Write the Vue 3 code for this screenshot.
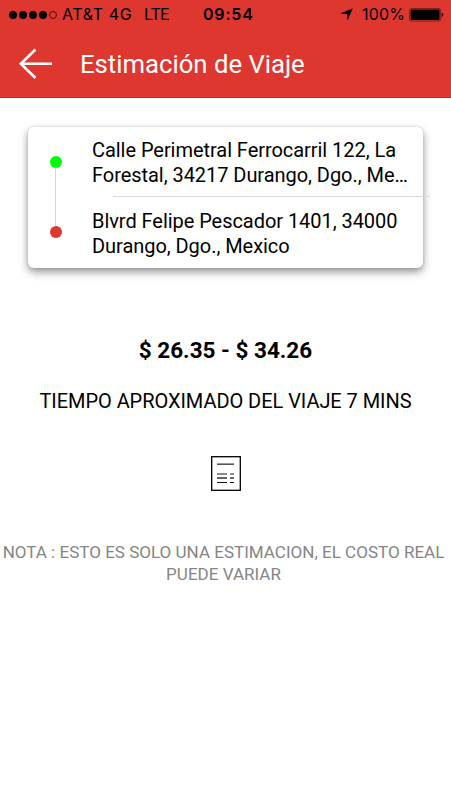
<template>
  <div class="screen">
    <header class="header">
      <div class="status-bar">
        <div class="signal">
          <span v-for="n in 5" :key="n" class="signal-dot" :class="{ empty: n === 5 }"></span>
        </div>
        <span class="carrier">AT&amp;T 4G</span>
        <span class="network">LTE</span>
        <span class="time">09:54</span>
        <svg class="location" width="13" height="13" viewBox="0 0 13 13">
          <path d="M12.8 0.2 L7.6 12.6 L6.9 6.1 L0.2 5.5 Z" fill="#000" />
        </svg>
        <span class="percent">100%</span>
        <svg class="battery" width="35" height="14" viewBox="0 0 35 14">
          <rect x="0.6" y="0.6" width="31" height="12.4" rx="1.6" fill="none" stroke="#7d1d19" stroke-width="1" />
          <rect x="1.6" y="1.6" width="29" height="10.4" rx="0.8" fill="#000" />
          <path d="M32.6 4.6 Q34.4 5.2 34.4 6.8 Q34.4 8.4 32.6 9 Z" fill="#2b0806" />
        </svg>
      </div>

      <div class="nav-bar">
        <button class="back-button" aria-label="Atrás">
          <svg width="34" height="32" viewBox="0 0 34 32">
            <path d="M16.5 1.5 L1.8 15.7 L16.5 30 M1.8 15.7 H33" fill="none" stroke="#fff" stroke-width="2.6" />
          </svg>
        </button>
        <h1 class="title">Estimación de Viaje</h1>
      </div>
    </header>

    <section class="route-card">
      <div class="route-marks">
        <span class="dot origin"></span>
        <span class="route-line"></span>
        <span class="dot destination"></span>
      </div>
      <div class="addresses">
        <p class="address">
          <span v-for="line in origin" :key="line" class="line">{{ line }}</span>
        </p>
        <div class="divider"></div>
        <p class="address">
          <span v-for="line in destination" :key="line" class="line">{{ line }}</span>
        </p>
      </div>
    </section>

    <section class="estimate">
      <p class="price">$ 26.35 - $ 34.26</p>
      <p class="duration">TIEMPO APROXIMADO DEL VIAJE 7 MINS</p>
      <svg class="receipt" width="30" height="36" viewBox="0 0 30 36">
        <rect x="0.7" y="0.7" width="28.6" height="33.6" fill="#fff" stroke="#000" stroke-width="1.3" />
        <path d="M6 8.2 H23" stroke="#555" stroke-width="1.6" />
        <path d="M6 18 H16 M19 18 H23" stroke="#666" stroke-width="1.5" />
        <path d="M6 22 H16 M19 22 H23" stroke="#333" stroke-width="1.4" />
        <path d="M6 26.5 H16 M19 26.5 H23" stroke="#111" stroke-width="1.2" />
      </svg>
      <p class="note">NOTA : ESTO ES SOLO UNA ESTIMACION, EL COSTO REAL<br />PUEDE VARIAR</p>
    </section>
  </div>
</template>

<script setup>
const origin = ["Calle Perimetral Ferrocarril 122, La", "Forestal, 34217 Durango, Dgo., Me…"];

const destination = ["Blvrd Felipe Pescador 1401, 34000", "Durango, Dgo., Mexico"];
</script>

<style>
body {
  margin: 0;
  background: #fff;
}
</style>

<style scoped>
.screen {
  width: 451px;
  height: 800px;
  overflow: hidden;
  background: #fff;
  color: #000;
  font-family: Roboto, sans-serif;
}

p,
h1 {
  margin: 0;
  font-weight: 400;
  white-space: nowrap;
}

.header {
  height: 98px;
  box-sizing: border-box;
  background: #de3730;
  border-bottom: 1px solid #d81f1b;
}

.status-bar {
  display: flex;
  align-items: center;
  height: 29px;
  padding-left: 9px;
  font-family: Inter, sans-serif;
  font-size: 16px;
  line-height: 29px;
  white-space: nowrap;
}

.signal {
  display: flex;
  gap: 2px;
  width: 53px;
}

.signal-dot {
  box-sizing: border-box;
  width: 8px;
  height: 8px;
  border-radius: 50%;
  background: #000;
}

.signal-dot.empty {
  background: none;
  border: 1px solid #4a110e;
}

.carrier {
  width: 82px;
  letter-spacing: 0.6px;
}

.network {
  width: 59px;
  letter-spacing: -0.9px;
}

.time {
  width: 137px;
  font-weight: 600;
  letter-spacing: 0.8px;
}

.location {
  width: 13px;
  margin-right: 9px;
}

.percent {
  width: 47px;
  letter-spacing: 0.2px;
}

.battery {
  flex-shrink: 0;
}

.nav-bar {
  display: flex;
  align-items: center;
  height: 69px;
  padding-left: 19px;
}

.back-button {
  display: flex;
  width: 61px;
  padding: 0;
  border: none;
  background: none;
  cursor: pointer;
}

.title {
  color: #fff;
  font-size: 25.7px;
  line-height: 30px;
}

.route-card {
  display: flex;
  box-sizing: border-box;
  width: 395px;
  height: 141px;
  margin: 28.5px 0 0 28px;
  border-radius: 6px;
  background: #fff;
  box-shadow: 0 4px 8px rgba(0, 0, 0, 0.42), 0 0 3px rgba(0, 0, 0, 0.12);
}

.route-marks {
  display: flex;
  flex-direction: column;
  flex-shrink: 0;
  align-items: center;
  width: 55px;
  margin-right: 1px;
  padding-top: 29px;
}

.dot {
  width: 12px;
  height: 12px;
  border-radius: 50%;
}

.origin {
  background: #00fc08;
}

.destination {
  background: #de3730;
}

.route-line {
  width: 1px;
  height: 58px;
  background: #d8d8d8;
}

.addresses {
  padding: 11px 0 0 8px;
}

.address {
  font-size: 20px;
  line-height: 25.5px;
  letter-spacing: -0.05px;
}

.line {
  display: block;
}

/* runs past the right edge of the card */
.divider {
  width: 317px;
  height: 1px;
  margin: 7.5px 0 11.5px 21px;
  background: #dadada;
}

.estimate {
  display: flex;
  flex-direction: column;
  align-items: center;
}

.price {
  margin-top: 68.5px;
  font-size: 22.5px;
  font-weight: 700;
  line-height: 28px;
}

.duration {
  margin-top: 25px;
  font-size: 20px;
  line-height: 24px;
  letter-spacing: -0.05px;
}

.receipt {
  margin-top: 43px;
}

.note {
  margin: 49px 4px 0 0;
  color: #858585;
  font-size: 17.05px;
  line-height: 22px;
  text-align: center;
}
</style>
